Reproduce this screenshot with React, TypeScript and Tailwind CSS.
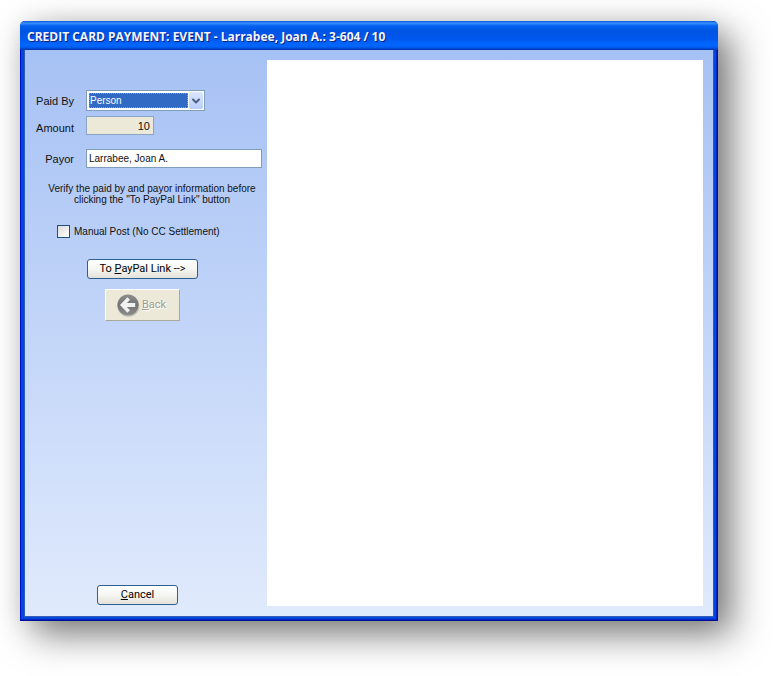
import { useState } from "react";
import { ChevronDown } from "lucide-react";

const PAYERS = ["Person", "Company"];

function BackIcon() {
  return (
    <svg viewBox="0 0 24 24" className="h-6 w-6 shrink-0" aria-hidden="true">
      <defs>
        <linearGradient id="disc" x1="0" y1="0" x2="0" y2="1">
          <stop offset="0" stopColor="#8d8d8d" />
          <stop offset="0.5" stopColor="#747474" />
          <stop offset="1" stopColor="#8c8c8c" />
        </linearGradient>
      </defs>
      <ellipse cx="12.5" cy="13" rx="11" ry="10.8" fill="#c4c2b6" />
      <circle cx="12" cy="12" r="10.6" fill="url(#disc)" />
      <path d="M4 12 11.4 4.2l2.6 2.6-3.2 3.3h8.4v3.8h-8.4l3.2 3.3-2.6 2.6z" fill="#f1f1f1" />
    </svg>
  );
}

const xpButton =
  "h-5 rounded-[3px] border border-[#2f5f8f] bg-linear-to-b from-white via-[#f6f6f2] to-[#e3e2da] font-[Roboto,sans-serif] text-[11px] leading-4 text-black";

export default function App() {
  const [paidBy, setPaidBy] = useState("Person");
  const [payor, setPayor] = useState("Larrabee, Joan A.");
  const [manual, setManual] = useState(false);

  return (
    <div className="flex min-h-screen bg-white pt-[21px] pr-[55px] pb-[55px] pl-5 font-['Liberation_Sans',Arial,sans-serif] text-[11px] leading-3 text-[#111]">
      <main className="flex flex-1 flex-col rounded-t-[5px] bg-[#0033d4] shadow-[14px_14px_36px_rgba(0,0,0,0.5),0_0_24px_rgba(0,0,0,0.1)]">
        <header className="flex h-[29px] items-center rounded-t-[5px] bg-[linear-gradient(to_bottom,#0a4fd8_0px,#3a92ff_2px,#0560ee_5px,#0054e3_10px,#0058ee_18px,#0068ff_24px,#0060f5_26px,#0035b0_29px)] px-[7px] pt-[3px]">
          <h1 className="font-['Trebuchet_MS','Open_Sans',sans-serif] text-[12px] leading-4 font-bold text-[#f4f6ff] [text-shadow:1px_1px_0_#0a1f80]">
            CREDIT CARD PAYMENT: EVENT - Larrabee, Joan A.: 3-604 / 10
          </h1>
        </header>

        <div className="flex flex-1 bg-[#0046e0] px-1 pb-1 shadow-[inset_1px_0_0_#0010c8,inset_-1px_-1px_0_#00128c,inset_-2px_-2px_0_#0020c0]">
          <div className="flex flex-1 border-x border-b border-x-[#2c5bb5] border-b-[#3a5fb0] bg-linear-to-b from-[#a6c1f4] to-[#e0eafc] pt-[10px] pr-[10px] pb-[10px]">
            <form className="flex w-[242px] shrink-0 flex-col pt-[30px]" onSubmit={(e) => e.preventDefault()}>
              <div className="grid grid-cols-[49px_1fr] items-center gap-x-3 pr-[5px]">
                <label htmlFor="paid-by" className="text-right">
                  Paid By
                </label>
                <div className="relative flex h-[21px] w-[119px] border border-[#7f9db9] bg-white p-[2px]">
                  <select
                    id="paid-by"
                    value={paidBy}
                    onChange={(e) => setPaidBy(e.target.value)}
                    className="w-[99px] appearance-none rounded-none border border-dotted border-[#c9963a] bg-[#316ac5] text-[10px] leading-3 text-white outline-none"
                  >
                    {PAYERS.map((p) => (
                      <option key={p}>{p}</option>
                    ))}
                  </select>
                  <span className="pointer-events-none absolute top-px right-px bottom-px flex w-[14px] items-center justify-center rounded-xs bg-linear-to-b from-[#dce6fd] to-[#b9cdf8]">
                    <ChevronDown size={12} strokeWidth={4} className="text-[#4d6185]" />
                  </span>
                </div>

                <label htmlFor="amount" className="mt-[10px] text-right">
                  Amount
                </label>
                <input
                  id="amount"
                  value="10"
                  readOnly
                  className="mt-[5px] h-[19px] w-[68px] border border-[#8aa6c4] bg-[#ece9d8] pr-[3px] text-right outline-none"
                />

                <label htmlFor="payor" className="mt-[14px] text-right">
                  Payor
                </label>
                <input
                  id="payor"
                  value={payor}
                  onChange={(e) => setPayor(e.target.value)}
                  className="mt-[14px] h-[19px] w-full border border-[#7f9db9] bg-white px-[2px] text-[10px] outline-none"
                />
              </div>

              <p className="mt-[15px] pl-3 text-center text-[10px] leading-[11px]">
                Verify the paid by and payor information before
                <br />
                clicking the "To PayPal Link" button
              </p>

              <label className="mt-5 flex items-center gap-1 pl-8 text-[10px]">
                <input
                  type="checkbox"
                  checked={manual}
                  onChange={(e) => setManual(e.target.checked)}
                  className="h-[13px] w-[13px] appearance-none border border-[#1c5180] bg-linear-to-br from-[#dcdcd7] to-white checked:bg-[#21a121]"
                />
                Manual Post (No CC Settlement)
              </label>

              <button type="submit" className={`${xpButton} mt-[21px] ml-[62px] w-[111px]`}>
                To <u>P</u>ayPal Link --&gt;
              </button>
              <button
                type="button"
                disabled
                className="mt-[10px] ml-20 flex h-8 w-[75px] items-center gap-[2px] border border-t-white border-r-[#aca899] border-b-[#aca899] border-l-white bg-[#ece9d8] pl-[10px] font-[Roboto,sans-serif] text-[11px] text-[#a09d8c] [text-shadow:1px_1px_0_#fff]"
              >
                <BackIcon />
                <span>
                  <u>B</u>ack
                </span>
              </button>

              <button type="button" className={`${xpButton} mt-auto mb-px ml-[72px] w-[81px]`}>
                <u>C</u>ancel
              </button>
            </form>

            <section aria-label="Payment page" className="flex-1 bg-white" />
          </div>
        </div>
      </main>
    </div>
  );
}
